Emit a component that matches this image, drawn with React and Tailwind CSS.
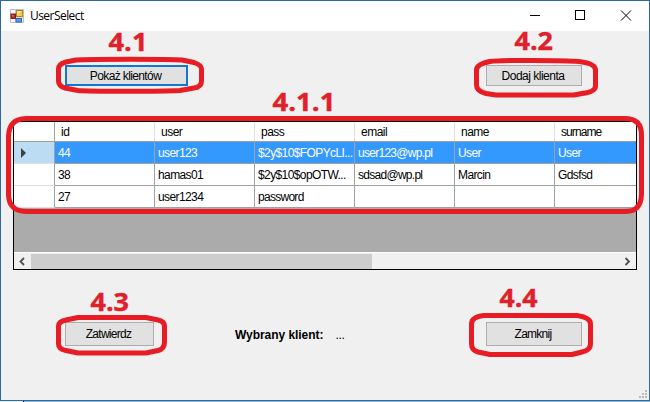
const columns = ['id', 'user', 'pass', 'email', 'name', 'surname'];

const rows = [
  ['44', 'user123', '$2y$10$FOPYcLI...', 'user123@wp.pl', 'User', 'User'],
  ['38', 'hamas01', '$2y$10$opOTW...', 'sdsad@wp.pl', 'Marcin', 'Gdsfsd'],
  ['27', 'user1234', 'password', '', '', ''],
];

const labels = [
  { text: '4.1', x: 108.5, y: 51, w: 39 },
  { text: '4.2', x: 514.5, y: 50, w: 38.5 },
  { text: '4.1.1', x: 272.5, y: 111, w: 63 },
  { text: '4.3', x: 90.5, y: 311, w: 38.5 },
  { text: '4.4', x: 499.5, y: 307, w: 38 },
];

const rings = [
  'M76 60C90 59 170 59 182 60L194 62.500Q201.500 65 201.500 69V81Q201.500 87 194 88L180 90.500C160 91.500 90 91.500 78 90.500L65 88Q58.500 86 58.500 81V69Q58.500 64 66 62Z',
  'M490 61.500C500 60 565 60 579 61.500Q595.500 63.500 595.500 70V86Q595.500 92 582 93.500L574 95H496L486 93.500Q476.500 91 476.500 85V70Q476.500 64 490 61.500Z',
  'M26 118.500H626Q641.500 119 641.500 135V194Q641 211.500 626 211.500H26Q9 211 8.500 195V136Q9 119 26 118.500Z',
  'M78 317.500H146L158 320Q164.500 321.500 164.500 326V342Q164.500 349 158 350.500L146 353H78L66 350.500Q58.500 349 58.500 344V326Q58.500 321.500 66 320Z',
  'M484 315.500H577Q590.500 317.500 590.500 324V344Q590.500 350 582 352L572 354.500H490L478 352Q471.500 350 471.500 344V324Q471.500 317 484 315.500Z',
];

function AppIcon() {
  return (
    <svg width="14" height="14" viewBox="0 0 14 14" className="ml-[9px] shrink-0">
      <path d="M.5.5h13v13H.5z" fill="#f7f7f7" stroke="#bdbdbd" />
      <path d="M5.500 0v14M0 9h14" stroke="#c5c5c5" />
      <rect x="6.500" y="1.500" width="6" height="6" fill="#f6ce4c" stroke="#a9852f" />
      <path d="M7 2h4l-4 4z" fill="#fbe38c" />
      <rect x="1" y="5" width="4.500" height="4.500" fill="#b02a20" stroke="#7e201c" />
      <rect x="2" y="6" width="1.500" height="1.500" fill="#e2837a" />
      <rect x="6" y="9.500" width="5.500" height="3.500" fill="#5d9de6" stroke="#2f62b3" />
    </svg>
  );
}

function Button({ children, className }) {
  return (
    <button
      className={`flex items-center justify-center bg-[#e1e1e1] pr-[2px] text-[12px] leading-none whitespace-nowrap text-black ${className}`}
    >
      {children}
    </button>
  );
}

function TitleBar() {
  return (
    <header className="flex h-[30px] shrink-0 items-center bg-white">
      <AppIcon />
      <h1 className="ml-[6px] flex-1 font-['Open_Sans',sans-serif] text-[12px] leading-none tracking-[-0.55px] text-black">
        UserSelect
      </h1>
      <svg width="120" height="30" viewBox="0 0 120 30" fill="none" stroke="black" shapeRendering="crispEdges">
        <path d="M1 14.500h10M46.500 9.500h9v9h-9z" />
        <path d="M92 9.500l10 10M102 9.500l-10 10" shapeRendering="auto" />
      </svg>
    </header>
  );
}

function Grid() {
  return (
    <section className="ml-3 flex h-[149px] w-[624px] flex-col overflow-hidden border border-black bg-[#ababab]">
      <div className="grid h-5 shrink-0 grid-cols-[41px_repeat(5,100px)_82px] border-b border-[#a0a0a0] bg-white">
        <div className="border-r border-[#a0a0a0]" />
        {columns.map((c) => (
          <div
            key={c}
            className={`flex items-center border-r border-[#e0e0e0] pt-px pl-[6px] text-[12px] leading-none ${c === 'surname' ? 'tracking-[-0.9px]' : 'tracking-[-0.5px]'}`}
          >
            {c}
          </div>
        ))}
      </div>
      {rows.map((row, i) => (
        <div
          key={row[0]}
          className={`grid h-[22px] shrink-0 grid-cols-[41px_repeat(5,100px)_82px] leading-none ${i === 0 ? 'bg-[#3399ff] text-white' : 'bg-white text-black'}`}
        >
          <div
            className={`flex items-center border-r border-b border-r-[#a0a0a0] border-b-[#e0e0e0] pl-[7px] ${i === 0 ? 'bg-[#bcdcf4]' : 'bg-white'}`}
          >
            {i === 0 && (
              <svg width="5" height="10" viewBox="0 0 5 10">
                <path d="M0 0l5 5-5 5z" fill="#404040" />
              </svg>
            )}
          </div>
          {row.map((cell, j) => (
            <div
              key={j}
              className={`flex items-center border-r border-b border-[#a0a0a0] pl-[3px] text-[12px] whitespace-nowrap ${cell.includes('@') || cell === 'password' ? 'tracking-[-0.72px]' : 'tracking-[-0.6px]'}`}
            >
              {cell}
            </div>
          ))}
        </div>
      ))}
      <div className="mt-auto flex h-[17px] shrink-0 items-center border-t border-white bg-[#f0f0f0]">
        <svg width="17" height="15" viewBox="0 0 17 15" fill="none" stroke="#505050" strokeWidth="1.800">
          <path d="M10 4L6.500 7.500L10 11" />
        </svg>
        <div className="h-[15px] w-[341px] bg-[#cdcdcd]" />
        <svg width="17" height="15" viewBox="0 0 17 15" fill="none" stroke="#505050" strokeWidth="1.800" className="ml-auto">
          <path d="M6.500 4L10 7.500L6.500 11" />
        </svg>
      </div>
    </section>
  );
}

function SizeGrip() {
  return (
    <svg width="8" height="8" viewBox="0 0 8 8" fill="#bcbcbc" className="mr-[2px] mb-[2px] ml-auto">
      <path d="M6 0h2v2H6zM3 3h2v2H3zM6 3h2v2H6zM0 6h2v2H0zM3 6h2v2H3zM6 6h2v2H6z" />
    </svg>
  );
}

function Annotations() {
  return (
    <svg width="650" height="402" viewBox="0 0 650 402" className="pointer-events-none absolute inset-0">
      <g fill="none" stroke="#e81c24" strokeWidth="5" strokeLinejoin="round">
        {rings.map((d) => (
          <path key={d} d={d} />
        ))}
      </g>
      <g fill="#e0202a" stroke="#e0202a" strokeWidth="0.400" className="font-['Open_Sans',sans-serif] text-[25px] font-bold">
        {labels.map((l) => (
          <text key={l.text} x={l.x} y={l.y} textLength={l.w} lengthAdjust="spacingAndGlyphs">
            {l.text}
          </text>
        ))}
      </g>
    </svg>
  );
}

export default function App() {
  return (
    <div className="relative flex h-[402px] w-[650px] flex-col overflow-hidden bg-[#8fb4d3] font-['Liberation_Sans',Arial,sans-serif] text-black">
      <div className="flex h-[401px] flex-col border border-[#2a6a9e] bg-[#f0f0f0]">
        <TitleBar />
        <div className="flex h-[90px] shrink-0 items-start justify-between pt-[34px] pr-[67px] pl-16">
          <Button className="h-[21px] w-[123px] border-2 border-[#0f78d0] pt-px tracking-[-0.62px]">Pokaż klientów</Button>
          <Button className="h-[21px] w-24 border border-[#adadad] pt-px tracking-[-0.5px]">Dodaj klienta</Button>
        </div>
        <Grid />
        <div className="mt-[52px] flex h-6 items-center pr-[67px] pl-16">
          <Button className="h-6 w-[89px] border border-[#adadad] tracking-[-0.72px]">Zatwierdz</Button>
          <p className="ml-[81px] pt-[2px] text-[12px] leading-none font-bold tracking-[-0.05px] whitespace-nowrap">Wybrany klient:</p>
          <p className="ml-[12px] pt-[2px] text-[12px] leading-none tracking-[-0.3px]">...</p>
          <Button className="ml-auto h-6 w-24 border border-[#adadad] tracking-[-0.75px]">Zamknij</Button>
        </div>
        <div className="mt-auto flex">
          <SizeGrip />
        </div>
      </div>
      <div className="flex h-px">
        <div className="w-[23px] bg-[#e4f1f8]" />
        <div className="w-px bg-black" />
      </div>
      <Annotations />
    </div>
  );
}
